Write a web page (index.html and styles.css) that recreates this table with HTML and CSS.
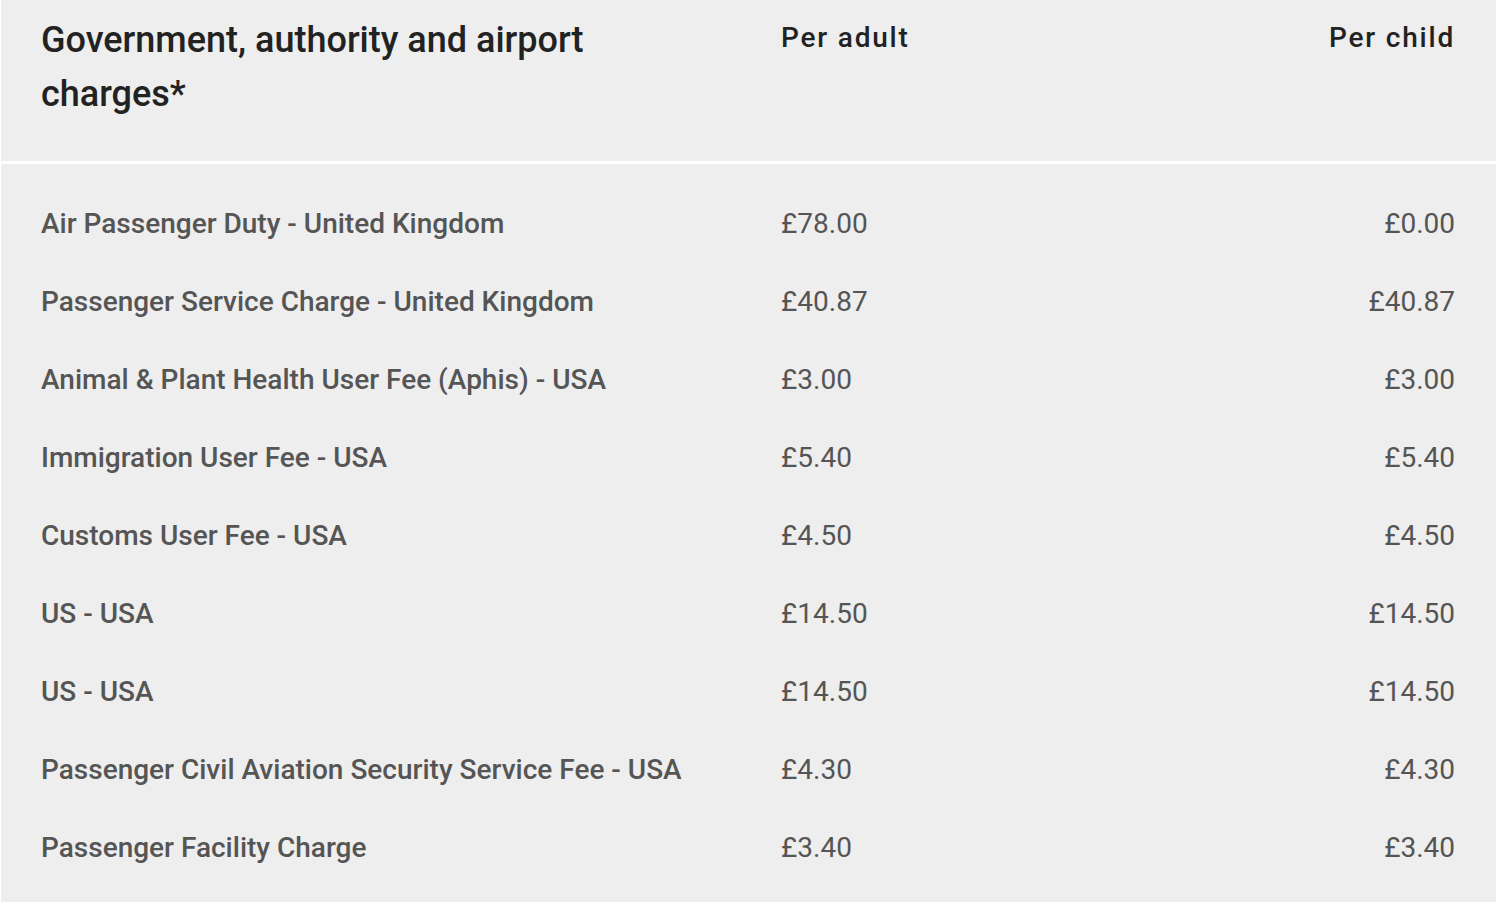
FILE: index.html
```html
<!DOCTYPE html>
<html lang="en">
<head>
  <meta charset="UTF-8">
  <meta name="viewport" content="width=device-width, initial-scale=1.0">
  <title>Taxes and charges</title>
  <link rel="stylesheet" href="styles.css">
</head>
<body>

  <!-- Charges table -->
  <div class="charges">
    <div class="charges-head">
      <h3 class="title">Government, authority and airport charges*</h3>
      <div class="col-label">Per adult</div>
      <div class="col-label right">Per child</div>
    </div>

    <div class="charges-body">
      <div class="row">
        <span class="name">Air Passenger Duty - United Kingdom</span>
        <span class="price">£78.00</span>
        <span class="price right">£0.00</span>
      </div>
      <div class="row">
        <span class="name">Passenger Service Charge - United Kingdom</span>
        <span class="price">£40.87</span>
        <span class="price right">£40.87</span>
      </div>
      <div class="row">
        <span class="name">Animal &amp; Plant Health User Fee (Aphis) - USA</span>
        <span class="price">£3.00</span>
        <span class="price right">£3.00</span>
      </div>
      <div class="row">
        <span class="name">Immigration User Fee - USA</span>
        <span class="price">£5.40</span>
        <span class="price right">£5.40</span>
      </div>
      <div class="row">
        <span class="name">Customs User Fee - USA</span>
        <span class="price">£4.50</span>
        <span class="price right">£4.50</span>
      </div>
      <div class="row">
        <span class="name">US - USA</span>
        <span class="price">£14.50</span>
        <span class="price right">£14.50</span>
      </div>
      <div class="row">
        <span class="name">US - USA</span>
        <span class="price">£14.50</span>
        <span class="price right">£14.50</span>
      </div>
      <div class="row">
        <span class="name">Passenger Civil Aviation Security Service Fee - USA</span>
        <span class="price">£4.30</span>
        <span class="price right">£4.30</span>
      </div>
      <div class="row">
        <span class="name">Passenger Facility Charge</span>
        <span class="price">£3.40</span>
        <span class="price right">£3.40</span>
      </div>
    </div>
  </div>

</body>
</html>
```

FILE: styles.css
```css
/* General Styles */
body {
  font-family: Roboto, 'Liberation Sans', sans-serif;
  margin: 0;
  padding: 0 2px 0 1px;
  background: #fff;
  color: #555;
}

/* Table wrapper */
.charges {
  background: #eeeeee;
  height: 902px;
}

.charges-head,
.row {
  display: grid;
  grid-template-columns: 740px 1fr 1fr;
  padding: 0 41px 0 40px;
}

/* Header */
.charges-head {
  height: 164px;
  border-bottom: 3px solid #fff;
  box-sizing: border-box;
  align-items: start;
  padding-top: 13px;
}

.title {
  margin: 0;
  font-size: 36px;
  font-weight: 500;
  line-height: 54px;
  color: #222;
  width: 600px;
}

.col-label {
  font-size: 28px;
  font-weight: 500;
  letter-spacing: 1.8px;
  color: #222;
  line-height: 40px;
  margin-top: 5px;
}

.right {
  text-align: right;
}

/* Body rows */
.charges-body {
  padding-top: 20px;
}

.row {
  height: 78px;
  align-items: center;
  font-size: 28px;
}

.name {
  font-weight: 500;
}

.price {
  font-weight: 400;
}
```
